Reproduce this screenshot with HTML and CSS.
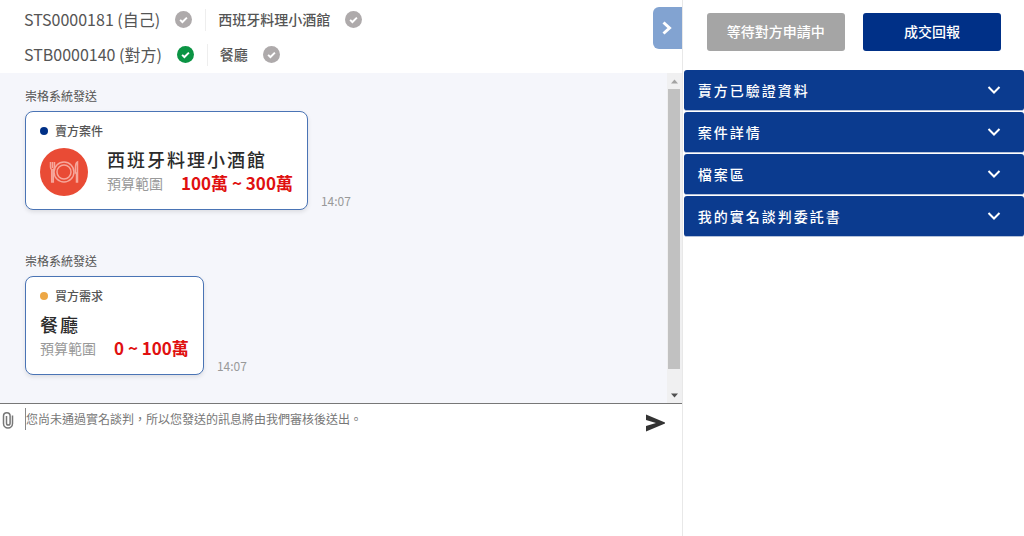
FILE: index.html
```html
<!DOCTYPE html>
<html lang="zh-Hant">
<head>
  <meta charset="UTF-8">
  <meta name="viewport" content="width=device-width, initial-scale=1.0">
  <title>實名談判</title>
  <link rel="stylesheet" href="styles.css">
</head>
<body>

  <svg class="defs" aria-hidden="true">
    <symbol id="check" viewBox="0 0 16 16">
      <circle cx="8" cy="8" r="8" fill="currentColor"/>
      <path d="M4.8 8.3l2.2 2.1 4.2-4.2" fill="none" stroke="#fff" stroke-width="1.8"/>
    </symbol>
    <symbol id="chevron" viewBox="0 0 14 10">
      <path d="M1.5 2l5.5 5.5L12.5 2" fill="none" stroke="#fff" stroke-width="2"/>
    </symbol>
  </svg>

  <div class="page">
    <main class="chat">
      <header class="chat-header">
        <div class="party">
          <span class="party-id">STS0000181 (自己)</span>
          <svg class="check"><use href="#check"/></svg>
          <span class="party-name">西班牙料理小酒館</span>
          <svg class="check"><use href="#check"/></svg>
        </div>
        <div class="party">
          <span class="party-id">STB0000140 (對方)</span>
          <svg class="check verified"><use href="#check"/></svg>
          <span class="party-name">餐廳</span>
          <svg class="check"><use href="#check"/></svg>
        </div>
        <button class="toggle" type="button" aria-label="收合">
          <svg width="10" height="14" viewBox="0 0 10 14"><path d="M1.5 1.5L7.5 7l-6 5.500" fill="none" stroke="#fff" stroke-width="3"/></svg>
        </button>
      </header>

      <div class="messages">
        <div class="message-list">
          <div class="message">
            <div class="sender">崇格系統發送</div>
            <div class="message-row">
              <div class="card">
                <div class="tag">賣方案件</div>
                <div class="card-body">
                  <svg class="case-icon" viewBox="0 0 48 48">
                    <circle cx="24" cy="24" r="24" fill="#e94b35"/>
                    <g fill="none" stroke="#f6a79b" stroke-width="1.5">
                      <circle cx="24" cy="24" r="10"/>
                      <circle cx="24" cy="24" r="7"/>
                      <path d="M10.500 14v5q0 2 1.200 2.500V34h1.600V21.500q1.200-.5 1.200-2.500v-5M12.500 14v6"/>
                      <path d="M37.500 34V14q-2 1-2 5v6h1V34z"/>
                    </g>
                  </svg>
                  <div>
                    <div class="case-title">西班牙料理小酒館</div>
                    <div class="budget"><span>預算範圍</span><strong>100萬 ~ 300萬</strong></div>
                  </div>
                </div>
              </div>
              <time>14:07</time>
            </div>
          </div>

          <div class="message">
            <div class="sender">崇格系統發送</div>
            <div class="message-row">
              <div class="card">
                <div class="tag buyer">買方需求</div>
                <div class="card-body">
                  <div>
                    <div class="case-title">餐廳</div>
                    <div class="budget"><span>預算範圍</span><strong>0 ~ 100萬</strong></div>
                  </div>
                </div>
              </div>
              <time>14:07</time>
            </div>
          </div>
        </div>

        <div class="scrollbar" aria-hidden="true">
          <svg viewBox="0 0 15 15"><path d="M4 10l3.500-4L11 10z" fill="#a3a3a3"/></svg>
          <div class="thumb"></div>
          <svg viewBox="0 0 15 15"><path d="M4 6l3.500 4L11 6z" fill="#505050"/></svg>
        </div>
      </div>

      <form class="compose">
        <button class="attach" type="button" aria-label="附加檔案">
          <svg width="12" height="18" viewBox="0 0 12 18"><path d="M10.500 4.500v8a4.500 4.500 0 0 1-9 0V5a3.300 3.300 0 0 1 6.600 0v7.200a1.800 1.800 0 0 1-3.600 0V5" fill="none" stroke="#777" stroke-width="1.500"/></svg>
        </button>
        <span class="caret"></span>
        <textarea aria-label="訊息" placeholder="您尚未通過實名談判，所以您發送的訊息將由我們審核後送出。"></textarea>
        <button class="send" type="button" aria-label="送出">
          <svg width="20" height="18" viewBox="0 0 20 18"><path d="M1 0.500L20 8.500v1L1 17.500V12l10-3L1 6z" fill="#333"/></svg>
        </button>
      </form>
    </main>

    <aside class="sidebar">
      <div class="actions">
        <button class="btn waiting" type="button">等待對方申請中</button>
        <button class="btn" type="button">成交回報</button>
      </div>
      <div class="accordion">
        <button type="button">賣方已驗證資料<svg><use href="#chevron"/></svg></button>
        <button type="button">案件詳情<svg><use href="#chevron"/></svg></button>
        <button type="button">檔案區<svg><use href="#chevron"/></svg></button>
        <button type="button">我的實名談判委託書<svg><use href="#chevron"/></svg></button>
      </div>
    </aside>
  </div>

</body>
</html>
```

FILE: styles.css
```css
* {
  box-sizing: border-box;
}

body {
  margin: 0;
  font-family: "Noto Sans CJK TC", "Noto Sans", sans-serif;
  font-size: 14px;
  color: #555;
  background: #fff;
}

button,
textarea {
  font: inherit;
  border: 0;
  padding: 0;
  background: none;
}

button {
  cursor: pointer;
}

.defs {
  position: absolute;
  width: 0;
  height: 0;
}

.page {
  display: grid;
  grid-template-columns: 2fr 1fr;
  min-height: 100vh;
}

.chat {
  display: flex;
  flex-direction: column;
  border-right: 1px solid #e8e8e8;
}

/* header */
.chat-header {
  position: relative;
  padding: 2px 24px 1px;
}

.party {
  display: flex;
  align-items: center;
  height: 35px;
}

.party-id {
  padding-bottom: 2px;
  font-size: 16px;
}

.check {
  width: 17px;
  height: 17px;
  margin-left: 15px;
  color: #aeaaab;
}

.check.verified {
  color: #0b9444;
}

.party-name {
  margin-left: 13px;
  padding: 0 0 2px 12px;
  border-left: 1px solid #eee;
  font-weight: 500;
}

.toggle {
  position: absolute;
  top: 7px;
  right: 0;
  display: flex;
  align-items: center;
  justify-content: center;
  width: 29px;
  height: 42px;
  background: #82a3d1;
  border-radius: 6px 0 0 6px;
}

/* messages */
.messages {
  display: flex;
  background: #f5f6fb;
  border-bottom: 1px solid #777;
}

.message-list {
  flex: 1;
  display: flex;
  flex-direction: column;
  gap: 41px;
  padding: 13px 25px 28px;
}

.sender {
  margin-bottom: 5px;
  font-size: 12px;
  line-height: 20px;
}

.message-row {
  display: flex;
  align-items: flex-end;
  gap: 13px;
}

.message-row time {
  font-size: 12px;
  line-height: 18px;
  color: #999;
}

.card {
  padding: 9px 14px 13px;
  background: #fff;
  border: 1px solid #4a74b5;
  border-radius: 8px;
  box-shadow: 0 2px 4px rgba(0, 0, 0, 0.1);
}

.tag {
  display: flex;
  align-items: center;
  gap: 7px;
  margin-bottom: 5px;
  font-size: 12px;
  font-weight: 500;
  line-height: 20px;
}

.tag::before {
  content: "";
  width: 8px;
  height: 8px;
  border-radius: 50%;
  background: #003087;
}

.tag.buyer::before {
  background: #eda745;
}

.card-body {
  display: flex;
  align-items: flex-end;
  gap: 19px;
}

.case-icon {
  width: 48px;
  height: 48px;
}

.case-title {
  font-size: 18px;
  font-weight: 500;
  line-height: 26px;
  letter-spacing: 2px;
  color: #2b2b2b;
}

.budget {
  display: flex;
  align-items: center;
  gap: 18px;
  padding-bottom: 2px;
  line-height: 22px;
}

.budget span {
  color: #999;
}

.budget strong {
  font-size: 17px;
  color: #e01010;
}

.scrollbar {
  display: flex;
  flex-direction: column;
  width: 15px;
  background: #f0f0f1;
}

.scrollbar svg {
  width: 15px;
  height: 16px;
}

.thumb {
  flex: 1;
  width: 12px;
  margin: 0 auto 18px;
  background: #c1c1c1;
}

/* compose */
.compose {
  flex: 1;
  display: flex;
  align-items: flex-start;
  padding: 4px 17px 0 2px;
}

.attach {
  width: 23px;
  padding-top: 3px;
  text-align: left;
}

.caret {
  width: 1px;
  height: 22px;
  background: #888;
}

.compose textarea {
  flex: 1;
  align-self: stretch;
  padding-top: 1px;
  font-size: 12px;
  line-height: 20px;
  outline: none;
  resize: none;
}

.compose textarea::placeholder {
  color: #777;
}

.send {
  padding-top: 6px;
}

.send svg,
.attach svg {
  display: block;
}

/* sidebar */
.sidebar {
  padding: 13px 0 0 1px;
}

.actions {
  display: flex;
  gap: 18px;
  padding: 0 23px;
}

.btn {
  flex: 1;
  height: 38px;
  padding-bottom: 2px;
  border-radius: 3px;
  background: #003087;
  color: #fff;
  font-weight: 500;
}

.btn.waiting {
  background: #a5a5a5;
}

.accordion {
  display: flex;
  flex-direction: column;
  gap: 1px;
  margin-top: 19px;
}

.accordion button {
  display: flex;
  align-items: center;
  justify-content: space-between;
  padding: 9px 23px 9px 14px;
  border-bottom: 1px solid #b5c2da;
  border-radius: 3px;
  background: #0b3b8f;
  color: #fff;
  font-weight: 500;
  line-height: 22px;
  letter-spacing: 2px;
}

.accordion svg {
  width: 14px;
  height: 10px;
}
```
